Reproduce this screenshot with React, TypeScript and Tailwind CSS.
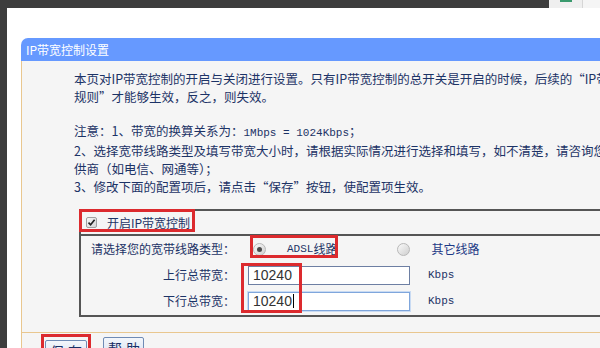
import React from 'react';

const Radio: React.FC<{ checked?: boolean }> = ({ checked }) => (
    <span className="w-[13px] h-[13px] shrink-0 rounded-full border border-[#b8b8b8] bg-linear-to-br from-[#fafafa] to-[#cfcfcf] flex items-center justify-center">
        {checked && <span className="w-[5px] h-[5px] rounded-full bg-[#4a4a4a]" />}
    </span>
);

const Checkbox: React.FC = () => (
    <span className="w-[11px] h-[11px] shrink-0 rounded-[2px] border border-[#a0a0a0] bg-linear-to-br from-[#f6f6f6] to-[#d6d6d6] flex items-center justify-center">
        <svg width="9" height="9" viewBox="0 0 9 9">
            <path d="M1.5 4.6 L3.6 6.8 L7.6 1.8" stroke="#222" strokeWidth="1.6" fill="none" />
        </svg>
    </span>
);

const Field: React.FC<{ label: string; value: string; focused?: boolean }> = ({ label, value, focused }) => (
    <div className="flex items-center h-[26px]">
        <div className="w-[159px] pr-[5px] text-right">{label}</div>
        <div
            className={`ml-[8px] w-[162px] h-[19px] bg-white flex items-center pl-[4px] font-['Liberation_Sans',sans-serif] text-[14px] text-[#333] ${
                focused ? 'border border-[#7fa6dc] shadow-[0_0_0_1px_#c9dbf3]' : 'border border-[#6d7fa3]'
            }`}
        >
            {value}
            {focused && <span className="ml-[1px] w-px h-[14px] bg-black" />}
        </div>
        <span className="ml-[18px] font-['Liberation_Mono',monospace] text-[11px]">Kbps</span>
    </div>
);

export default function App() {
    return (
        <div className="w-[600px] h-[348px] overflow-hidden bg-white flex font-['Noto_Sans_CJK_SC',sans-serif]">
            {/* dark left edge */}
            <div className="w-[7px] shrink-0 bg-[#3d3d3d]" />

            <div className="flex-1 min-w-0 flex flex-col">
                {/* top strip */}
                <div className="h-[8px] shrink-0 flex">
                    <div className="flex-1 bg-[#3d3d3d]" />
                    <div className="w-[33px] bg-[#efefef] pl-[11px]">
                        <div className="w-[12px] h-[2px] bg-[#3a9a6e]" />
                    </div>
                    <div className="w-[18px] bg-[#f5f5f5] border-l border-[#d6d6d6]" />
                </div>

                <div className="h-[30px] shrink-0" />

                {/* panel */}
                <div className="ml-[14px] flex-1 min-h-0 flex flex-col">
                    <div className="h-[23px] shrink-0 bg-[#6699ff] rounded-tl-[7px] pl-[5px] flex items-center text-white text-[12px]">
                        IP带宽控制设置
                    </div>

                    <div className="flex-1 bg-[#f5f5f5] border-l border-[#e9c78f] flex flex-col text-[#1c3366] whitespace-nowrap">
                        <div className="pl-[52px] pt-[9px] text-[12.5px] leading-[18px]">
                            <p>本页对IP带宽控制的开启与关闭进行设置。只有IP带宽控制的总开关是开启的时候，后续的“IP带宽控制</p>
                            <p>规则”才能够生效，反之，则失效。</p>
                            <p className="mt-[16px]">
                                注意：1、带宽的换算关系为：
                                <span className="font-['Liberation_Mono',monospace] text-[11px]">1Mbps = 1024Kbps</span>；
                            </p>
                            <p>2、选择宽带线路类型及填写带宽大小时，请根据实际情况进行选择和填写，如不清楚，请咨询您的网络服务提</p>
                            <p>供商（如电信、网通等）；</p>
                            <p>3、修改下面的配置项后，请点击“保存”按钮，使配置项生效。</p>
                        </div>

                        {/* settings box */}
                        <div className="ml-[57px] mt-[13px] relative border-y-2 border-l-2 border-[#555] text-[12px]">
                            <div className="h-[23px] flex items-center pl-[5px] gap-[10px]">
                                <Checkbox />
                                <span>开启IP带宽控制</span>
                            </div>
                            <div className="border-t-2 border-[#555] pb-[1px]">
                                <div className="flex items-center h-[26px]">
                                    <div className="w-[159px] pr-[5px] text-right">请选择您的宽带线路类型：</div>
                                    <div className="ml-[13px] flex items-center">
                                        <Radio checked />
                                        <span className="ml-[21px] font-['Liberation_Mono',monospace] text-[11px]">ADSL</span>
                                        <span>线路</span>
                                        <span className="ml-[60px]"><Radio /></span>
                                        <span className="ml-[21px] text-[#1e3a86]">其它线路</span>
                                    </div>
                                </div>
                                <Field label="上行总带宽：" value="10240" />
                                <Field label="下行总带宽：" value="10240" focused />
                            </div>

                            {/* red annotation outlines */}
                            <div className="absolute left-[-2px] top-[-2px] w-[116px] h-[23px] border-[3px] border-[#dc2a2e]" />
                            <div className="absolute left-[169px] top-[24px] w-[88px] h-[23px] border-[3px] border-[#dc2a2e]" />
                            <div className="absolute left-[160px] top-[52px] w-[61px] h-[50px] border-[3px] border-[#dc2a2e]" />
                        </div>

                        <div className="mt-[15px] border-t border-[#e9c78f] flex-1 flex items-start pl-[19px] pt-[1px] gap-[12px]">
                            <div className="border-[3px] border-[#dc2a2e] p-[1px]">
                                <button className="w-[42px] py-[1px] border border-[#6f8bb5] rounded-[2px] bg-linear-to-b from-[#f3f6fb] to-[#d6e0ef] text-[14px] tracking-[4px] pl-[4px] text-[#1a2f66] leading-[18px]">
                                    保存
                                </button>
                            </div>
                            <button className="mt-[3px] w-[41px] py-[1px] border border-[#6f8bb5] rounded-[2px] bg-linear-to-b from-[#f3f6fb] to-[#d6e0ef] text-[14px] tracking-[4px] pl-[4px] text-[#1a2f66] leading-[18px]">
                                帮助
                            </button>
                        </div>
                    </div>
                </div>
            </div>
        </div>
    );
}
